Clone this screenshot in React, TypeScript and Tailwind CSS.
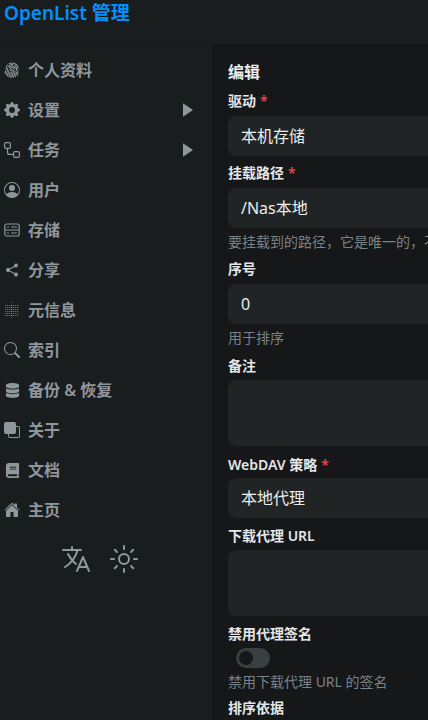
import React from 'react';
import { BsFingerprint, BsGearFill, BsPersonCircle, BsSearch, BsFront } from 'react-icons/bs';
import { FaDatabase, FaBook } from 'react-icons/fa';
import { IoLanguageOutline, IoSunnyOutline, IoShareSocial, IoHome } from 'react-icons/io5';

const fontStack = 'font-["Noto_Sans","Noto_Sans_CJK_SC",sans-serif]';

const RouteIcon = () => (
  <svg viewBox="0 0 16 16" width="16" height="16" fill="none" stroke="currentColor" strokeWidth="1.2">
    <rect x="0.6" y="0.6" width="5.8" height="5.8" rx="1.4" />
    <rect x="9.6" y="9.6" width="5.8" height="5.8" rx="1.4" />
    <path d="M3.5 6.4v4a2 2 0 0 0 2 2h4.1" />
  </svg>
);

const StorageIcon = () => (
  <svg viewBox="0 0 16 16" width="16" height="16" fill="none" stroke="currentColor" strokeWidth="1.2">
    <rect x="0.8" y="2" width="14.4" height="12" rx="2" />
    <path d="M1 8h14M3 5h2M7 5h6M3 11h2M7 11h6" />
  </svg>
);

const MetaIcon = () => (
  <svg viewBox="0 0 16 16" width="16" height="16" fill="currentColor">
    {[3, 5, 7, 9, 11, 13].flatMap((y) =>
      [1, 3, 5, 7, 9, 11, 13].map((x) => (
        <rect key={`${x}-${y}`} x={x} y={y} width="1.3" height="1" opacity={x === 7 ? 0.9 : 0.6} />
      ))
    )}
    <rect x="7" y="0" width="1.3" height="1.2" opacity="0.5" />
    <rect x="7" y="15" width="1.3" height="1" opacity="0.5" />
  </svg>
);

const Caret = () => (
  <svg viewBox="0 0 10 14" width="10" height="14" fill="currentColor" className="mr-[19px]">
    <path d="M0 0.2 10 7 0 13.8z" />
  </svg>
);

const items = [
  { label: '个人资料', icon: <BsFingerprint size={16} /> },
  { label: '设置', icon: <BsGearFill size={16} />, arrow: true },
  { label: '任务', icon: <RouteIcon />, arrow: true },
  { label: '用户', icon: <BsPersonCircle size={16} /> },
  { label: '存储', icon: <StorageIcon /> },
  { label: '分享', icon: <IoShareSocial size={16} /> },
  { label: '元信息', icon: <MetaIcon /> },
  { label: '索引', icon: <BsSearch size={16} /> },
  { label: '备份 & 恢复', icon: <FaDatabase size={15} /> },
  { label: '关于', icon: <BsFront size={16} /> },
  { label: '文档', icon: <FaBook size={15} /> },
  { label: '主页', icon: <IoHome size={16} /> },
];

const Label = ({ text, required, gap }: { text: string; required?: boolean; gap: string }) => (
  <div className={`h-6 flex items-center text-sm font-semibold text-[#e4e6e8] ${gap}`}>
    {text}
    {required && <span className="ml-1 text-[#e5484d]">*</span>}
  </div>
);

const Field = ({ value, tall, gap }: { value?: string; tall?: boolean; gap: string }) => (
  <div className={`w-[300px] rounded-lg bg-[#202425] pl-[13px] text-base text-[#ecedee] flex items-center ${tall ? 'h-[66px]' : 'h-10'} ${gap}`}>
    {value}
  </div>
);

const Help = ({ text }: { text: string }) => (
  <div className="w-[200px] text-sm text-[#7b8287] whitespace-nowrap mt-1 leading-[20px]">{text}</div>
);

export default function App() {
  return (
    <div className={`w-[428px] h-[720px] overflow-hidden bg-[#151718] flex flex-col ${fontStack}`}>
      <header className="h-[44px] shrink-0 bg-[#1a1d1e] pl-1 border-b border-[#181a1c]">
        <div className="text-[19px] font-semibold text-[#0091ff] leading-[26px]">OpenList 管理</div>
      </header>
      <div className="flex flex-1 min-h-0">
        <aside className="w-[212px] shrink-0 bg-[#1a1d1e] pt-[6px]">
          {items.map((item) => (
            <div key={item.label} className="h-10 flex items-center pl-1 text-[#8f979d]">
              <span className="w-4 flex justify-center shrink-0">{item.icon}</span>
              <span className="ml-2 text-base font-semibold flex-1">{item.label}</span>
              {item.arrow && <Caret />}
            </div>
          ))}
          <div className="flex justify-center gap-4 mt-[13px] pr-[12px] text-[#8f979d]">
            <IoLanguageOutline size={32} />
            <IoSunnyOutline size={32} />
          </div>
        </aside>
        <main className="flex-1 pl-4 pt-4 min-w-0 overflow-hidden">
          <div className="h-6 flex items-center text-base font-semibold text-[#ecedee]">编辑</div>
          <Label text="驱动" required gap="mt-[5px]" />
          <Field value="本机存储" gap="mt-[3px]" />
          <Label text="挂载路径" required gap="mt-[5px]" />
          <Field value="/Nas本地" gap="mt-[3px]" />
          <Help text="要挂载到的路径，它是唯一的，不能重复" />
          <Label text="序号" gap="mt-[5px]" />
          <Field value="0" gap="mt-[3px]" />
          <Help text="用于排序" />
          <Label text="备注" gap="mt-[6px]" />
          <Field tall gap="mt-[2px]" />
          <Label text="WebDAV 策略" required gap="mt-[7px]" />
          <Field value="本地代理" gap="mt-[1px]" />
          <Label text="下载代理 URL" gap="mt-[6px]" />
          <Field tall gap="mt-[2px]" />
          <Label text="禁用代理签名" gap="mt-[6px]" />
          <div className="ml-2 mt-[2px] w-[34px] h-5 rounded-full bg-[#3a3f42] p-[3px]">
            <div className="w-[14px] h-[14px] rounded-full bg-[#151718]" />
          </div>
          <Help text="禁用下载代理 URL 的签名" />
          <Label text="排序依据" gap="mt-1" />
        </main>
      </div>
    </div>
  );
}
